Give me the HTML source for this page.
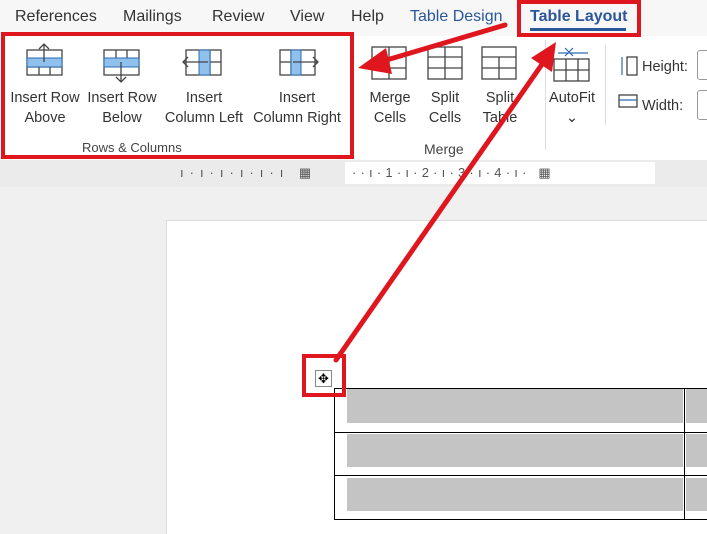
<!DOCTYPE html>
<html><head><style>
body{margin:0;width:707px;height:533px;overflow:hidden;background:#f0f0f0;font-family:"Liberation Sans",sans-serif;position:relative}
.a{position:absolute;white-space:nowrap}
.t{font-size:16px;color:#333;top:8px}
.l{font-size:14.5px;color:#333;text-align:center;line-height:20px}
.g{font-size:13px;color:#444}
</style></head><body>
<div class="a" style="left:0;top:0;width:707px;height:36px;background:#f7f7f7"></div>
<div class="a" style="left:0;top:36px;width:707px;height:124px;background:#fff"></div>
<div class="a t" style="left:15px">References</div>
<div class="a t" style="left:123px">Mailings</div>
<div class="a t" style="left:212px">Review</div>
<div class="a t" style="left:290px">View</div>
<div class="a t" style="left:351px">Help</div>
<div class="a t" style="left:410px;color:#2b579a">Table Design</div>
<div class="a t" style="left:530px;color:#2b579a;font-weight:bold">Table Layout</div>
<div class="a" style="left:530px;top:28px;width:96px;height:3px;background:#2b579a"></div>
<!-- ruler -->
<div class="a" style="left:0;top:160px;width:707px;height:27px;background:#ebebeb"></div>
<div class="a" style="left:345px;top:162px;width:310px;height:22px;background:#fff"></div>
<div class="a" style="left:180px;top:165px;font-size:13px;color:#555;letter-spacing:6px">ı·ı·ı·ı·ı·ı ▦</div>
<div class="a" style="left:352px;top:165px;font-size:13px;color:#555;letter-spacing:4.2px">··ı·1·ı·2·ı·3·ı·4·ı· ▦</div>
<!-- page -->
<div class="a" style="left:166px;top:220px;width:541px;height:313px;background:#fff;border-left:1px solid #ddd;border-top:1px solid #ddd"></div>
<div class="a" style="left:334px;top:388px;width:380px;height:130px;border:1px solid #000;border-right:none"></div>
<div class="a" style="left:334px;top:432px;width:380px;height:1px;background:#000"></div>
<div class="a" style="left:334px;top:475px;width:380px;height:1px;background:#000"></div>
<div class="a" style="left:684px;top:388px;width:1px;height:131px;background:#000"></div>
<div class="a" style="left:347px;top:389px;width:336px;height:34px;background:#c4c4c4"></div>
<div class="a" style="left:347px;top:434px;width:336px;height:33px;background:#c4c4c4"></div>
<div class="a" style="left:347px;top:478px;width:336px;height:33px;background:#c4c4c4"></div>
<div class="a" style="left:686px;top:389px;width:21px;height:34px;background:#c4c4c4"></div>
<div class="a" style="left:686px;top:434px;width:21px;height:33px;background:#c4c4c4"></div>
<div class="a" style="left:686px;top:478px;width:21px;height:33px;background:#c4c4c4"></div>
<div class="a" style="left:315px;top:370px;width:15px;height:15px;border:1px solid #888;font-size:13px;line-height:15px;text-align:center">✥</div>
<!-- labels -->
<div class="a l" style="left:8px;top:88px;width:74px">Insert Row<br>Above</div>
<div class="a l" style="left:84px;top:88px;width:76px">Insert Row<br>Below</div>
<div class="a l" style="left:162px;top:88px;width:84px">Insert<br>Column Left</div>
<div class="a l" style="left:250px;top:88px;width:94px">Insert<br>Column Right</div>
<div class="a g" style="left:82px;top:140px">Rows &amp; Columns</div>
<div class="a l" style="left:364px;top:88px;width:52px">Merge<br>Cells</div>
<div class="a l" style="left:420px;top:88px;width:50px">Split<br>Cells</div>
<div class="a l" style="left:475px;top:88px;width:50px">Split<br>Table</div>
<div class="a g" style="left:424px;top:141px;font-size:14px">Merge</div>
<div class="a l" style="left:542px;top:88px;width:60px">AutoFit<br>⌄</div>
<div class="a" style="left:545px;top:40px;width:1px;height:110px;background:#ddd"></div>
<div class="a" style="left:605px;top:45px;width:1px;height:80px;background:#ddd"></div>
<div class="a l" style="left:642px;top:57px">Height:</div>
<div class="a l" style="left:642px;top:96px">Width:</div>
<div class="a" style="left:697px;top:50px;width:14px;height:28px;border:1px solid #999;border-radius:3px;background:#fff"></div>
<div class="a" style="left:697px;top:90px;width:14px;height:28px;border:1px solid #999;border-radius:3px;background:#fff"></div>
<svg class="a" style="left:0;top:0" width="707" height="533">
<g fill="none" stroke="#444" stroke-width="1.3">
<rect x="27" y="50" width="35" height="25"/><line x1="27" y1="67" x2="62" y2="67"/><line x1="39" y1="67" x2="39" y2="75"/><line x1="50" y1="67" x2="50" y2="75"/>
<rect x="104" y="50" width="35" height="25"/><line x1="116" y1="50" x2="116" y2="58"/><line x1="127" y1="50" x2="127" y2="58"/>
<rect x="186" y="50" width="35" height="25"/><line x1="210" y1="50" x2="210" y2="75"/><line x1="210" y1="62" x2="221" y2="62"/>
<rect x="280" y="50" width="35" height="25"/><line x1="291" y1="50" x2="291" y2="75"/><line x1="280" y1="62" x2="291" y2="62"/>
<rect x="372" y="47" width="34" height="32"/><line x1="389" y1="47" x2="389" y2="79"/><line x1="372" y1="68" x2="406" y2="68"/>
<rect x="428" y="47" width="34" height="32"/><line x1="428" y1="57" x2="462" y2="57"/><line x1="428" y1="68" x2="462" y2="68"/><line x1="445" y1="47" x2="445" y2="79"/>
<rect x="482" y="47" width="34" height="32"/><line x1="482" y1="57" x2="516" y2="57"/><line x1="482" y1="68" x2="516" y2="68"/><line x1="499" y1="57" x2="499" y2="79"/>
<rect x="554" y="59" width="35" height="22"/><line x1="554" y1="70" x2="589" y2="70"/><line x1="566" y1="59" x2="566" y2="81"/><line x1="578" y1="59" x2="578" y2="81"/>
<rect x="627" y="57" width="10" height="18"/><rect x="619" y="95" width="18" height="12"/>
</g>
<g fill="#8fc1ec" stroke="#2b6cb0" stroke-width="1">
<rect x="27" y="58" width="35" height="9"/><rect x="104" y="58" width="35" height="9"/>
<rect x="199" y="50" width="11" height="25"/><rect x="291" y="50" width="10" height="25"/>
</g>
<g fill="none" stroke="#444" stroke-width="1.3">
<path d="M44 62V44M39 49l5-5 5 5"/><path d="M121 62V82M116 77l5 5 5-5"/><path d="M208 62H183M188 57l-5 5 5 5"/><path d="M293 62H318M313 57l5 5-5 5"/>
</g>
<g stroke="#2b6cb0" stroke-width="1.2" fill="none"><path d="M558 53h30M565 48l8 8M573 48l-8 8"/><path d="M622 57v18M619 100h18"/></g>
<g fill="none" stroke="#e0161f" stroke-width="4">
<rect x="3" y="34" width="349" height="123"/>
<rect x="519" y="2" width="120" height="33"/>
<rect x="304" y="356" width="40" height="39"/>
</g>
<g stroke="#e0161f" stroke-width="5" stroke-linecap="round"><line x1="505" y1="25" x2="380" y2="62"/><line x1="336" y1="360" x2="545" y2="60"/></g>
<g fill="#e0161f"><polygon points="358,68 386,48 392,74"/><polygon points="556,42 531,58 552,72"/></g>
</svg>
</body></html>
